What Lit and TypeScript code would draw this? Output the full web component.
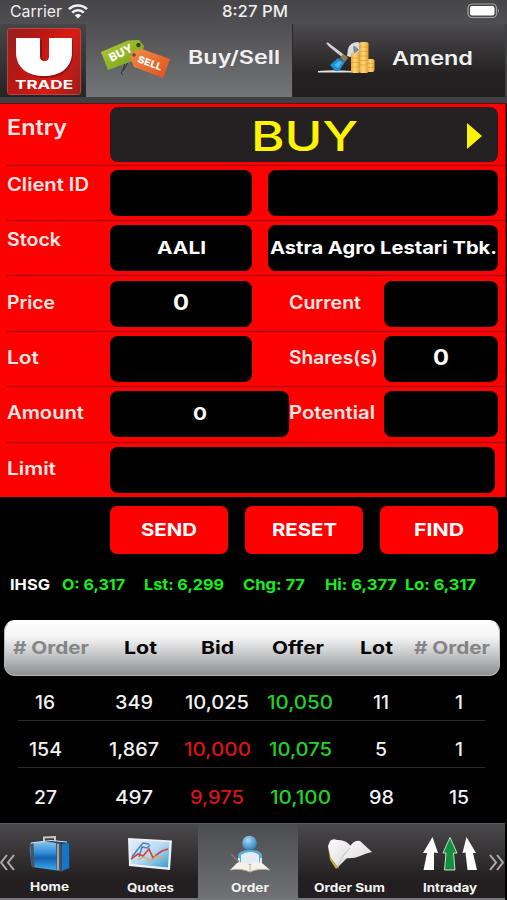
import { LitElement, html, css, svg, nothing } from "lit";
import { customElement, property } from "lit/decorators.js";
import { styleMap } from "lit/directives/style-map.js";

/** A single line of text, widened so that its letters fill a set width. */
@customElement("fit-text")
class FitText extends LitElement {
  @property({ type: Number }) w = 0;
  @property() text = "";

  static styles = css`
    :host { display: inline-block; white-space: pre; flex: none; text-align: left; }
    .run { display: inline-block; transform-origin: 0 50%; }
  `;

  render() {
    return html`<span class="run">${this.text}</span>`;
  }

  firstUpdated() {
    const run = this.renderRoot.querySelector(".run") as HTMLElement;
    const natural = run.getBoundingClientRect().width;
    this.style.width = `${this.w}px`;
    run.style.transform = `scaleX(${(this.w / natural).toFixed(4)})`;
    run.style.marginRight = `${(this.w - natural).toFixed(2)}px`;
  }
}

const fit = (text: string, w: number) => html`<fit-text .text=${text} .w=${w}></fit-text>`;

type Box = { text?: string; w?: number; cls?: string };
type Row = { label: string; lw: number; cls: string; a: Box; label2?: string; l2w?: number; b?: Box };

const ROWS: Row[] = [
  { label: "Client ID", lw: 82, cls: "pair high", a: {}, b: {} },
  { label: "Stock", lw: 54, cls: "pair high", a: { text: "AALI", w: 49 }, b: { text: "Astra Agro Lestari Tbk.", w: 227 } },
  { label: "Price", lw: 48, cls: "trio tall drop", a: { text: "0", w: 16, cls: "big" }, label2: "Current", l2w: 72, b: {} },
  { label: "Lot", lw: 32, cls: "trio", a: {}, label2: "Shares(s)", l2w: 89, b: { text: "0", w: 16, cls: "big" } },
  { label: "Amount", lw: 77, cls: "trio wide tall", a: { text: "0", w: 14 }, label2: "Potential", l2w: 86, b: {} },
  { label: "Limit", lw: 49, cls: "full last", a: {} },
];

const INDEX: [string, number, number][] = [
  ["O: 6,317", 0, 63], ["Lst: 6,299", 19, 80], ["Chg: 77", 19, 62], ["Hi: 6,377", 20, 72], ["Lo: 6,317", 8, 71],
];

const HEADS: [string, number, boolean][] = [
  ["# Order", 76, true], ["Lot", 33, false], ["Bid", 33, false], ["Offer", 52, false], ["Lot", 33, false], ["# Order", 76, true],
];

const BOOK: [string, number, string?][][] = [
  [["16", 20], ["349", 38], ["10,025", 64], ["10,050", 66, "up"], ["11", 16], ["1", 8]],
  [["154", 33], ["1,867", 50], ["10,000", 67, "down"], ["10,075", 63, "up"], ["5", 12], ["1", 8]],
  [["27", 23], ["497", 38], ["9,975", 54, "down"], ["10,100", 61, "up"], ["98", 25], ["15", 20]],
];

const wifi = svg`<svg class="wifi" width="20" height="15" viewBox="0 0 20 15" fill="none" stroke="#f2f2f2" stroke-width="2.5">
  <path d="M1 5.2a12.8 12.8 0 0 1 18 0"/><path d="M4.2 8.6a8.2 8.2 0 0 1 11.6 0"/>
  <path d="M10 14.4 6.8 11.2a4.6 4.6 0 0 1 6.4 0z" fill="#f2f2f2" stroke="none"/></svg>`;

const battery = svg`<svg class="battery" width="34" height="16" viewBox="0 0 34 16">
  <rect x="1" y="1" width="28.5" height="13.5" rx="4" fill="none" stroke="#a2a2a2" stroke-width="1.2"/>
  <rect x="3" y="3" width="24.5" height="9.5" rx="2.2" fill="#fff"/>
  <path d="M31 5.5q1.8 2.2 0 4.5z" fill="#a2a2a2"/></svg>`;

const logoU = svg`<svg width="58" height="42" viewBox="0 0 58 42">
  <path d="M3 3h24v17q0 4 4 4t4-4V3h23v14c0 17-13 24-27 24S3 34 3 17z" fill="#6d0d0b" opacity=".6"/>
  <path d="M1 1h24v18.500q0 4.500 4.500 4.500t4.500-4.500V1h23v14c0 17-13 24-28 24S1 32 1 15z" fill="#fff"/></svg>`;

const tags = svg`<svg width="72" height="40" viewBox="0 0 72 40" font-family="Inter, sans-serif" font-weight="800" fill="#fff">
  <defs>
    <linearGradient id="tg" x1="0" y1="0" x2="1" y2="1"><stop offset="0" stop-color="#b5d233"/><stop offset="1" stop-color="#6f961c"/></linearGradient>
    <linearGradient id="to" x1="0" y1="0" x2="1" y2="1"><stop offset="0" stop-color="#f28c4a"/><stop offset="1" stop-color="#e04f1a"/></linearGradient>
  </defs>
  <path d="M24 20q2 7-3 14l2 2M32 16l-9 16" fill="none" stroke="#333" stroke-width="1"/>
  <path d="M1 13 28 1.500 39 1l5 6-3 12-33 12z" fill="url(#tg)"/>
  <circle cx="38.500" cy="6" r="2.200" fill="#3c4219"/>
  <path d="M34 12 42 10 70 20 63 39 34 28 30 18z" fill="url(#to)"/>
  <circle cx="34" cy="16" r="1.800" fill="#6b4630"/>
  <text x="0" y="0" font-size="11.500" textLength="25" lengthAdjust="spacingAndGlyphs" transform="translate(11.500 23) rotate(-27)">BUY</text>
  <text x="0" y="0" font-size="9.500" textLength="25" lengthAdjust="spacingAndGlyphs" transform="translate(37 23) rotate(20)">SELL</text></svg>`;

const amend = svg`<svg width="58" height="34" viewBox="0 0 58 34">
  <defs>
    <linearGradient id="gold" x1="0" x2="1"><stop offset="0" stop-color="#eda93e"/><stop offset=".45" stop-color="#fcd876"/><stop offset="1" stop-color="#e59c30"/></linearGradient>
  </defs>
  <path d="M1 30q16-1.500 34 0v1.500H1z" fill="#e3e0df"/>
  <path d="M9 2 11 1.500 30 16l-2 2.500L12.500 6z" fill="#cfd1d3"/>
  <path d="M31 8q2-7 10-7l4 3-4 9-8 3-3-1z" fill="#d9dde0"/><path d="M36 5q3 0 6 4l-5 4z" fill="#828b93"/>
  <path d="m26 13 5 4-3 4-5-4z" fill="#8f7a58"/>
  <path d="m13 24 8-7 7 4-6 9h-4z" fill="#178fd0"/><path d="m17 24 5-4 3 2-4 5z" fill="#55b4e6"/>
  <g fill="url(#gold)"><rect x="42" y="1" width="9.500" height="31" rx="2"/><rect x="34" y="12" width="9" height="20" rx="2"/><rect x="50" y="18" width="7.500" height="13" rx="2"/></g>
  <path d="M42 6h9.500M42 10.500h9.500M42 15h9.500M42 19.500h9.500M42 24h9.500M34 17h9M34 21.500h9M34 26h9M50 22.500h7.500M50 26.500h7.500" stroke="#c98a2a" stroke-width=".4"/></svg>`;

const home = svg`<svg width="42" height="38" viewBox="0 0 42 38">
  <defs><linearGradient id="hb" x1="0" y1="0" x2="0" y2="1"><stop offset="0" stop-color="#87c6f2"/><stop offset=".4" stop-color="#2c87d4"/><stop offset=".55" stop-color="#145fae"/><stop offset="1" stop-color="#3fb2f0"/></linearGradient></defs>
  <path d="M15 7V2.500L26 2v5" fill="none" stroke="#c9c6c0" stroke-width="2"/>
  <path d="M1 8 36 5l5 4v24l-9 4z" fill="#24405c"/>
  <path d="M1 8q15-3 31 1v27L3 32Q0 20 1 8z" fill="url(#hb)"/>
  <path d="m33 9 7-1v25l-7 3z" fill="#1675c4"/>
  <path d="m1 8.500 3.500-.5 1 24L3 32zM27 8l5.500 1v27l-5-.8z" fill="#49545d"/><path d="m28 9 2 .3V35h-2z" fill="#9ca7ae"/>
  <path d="M2 8 22 5.500 38 7" stroke="#d7e8f4" stroke-width="1" fill="none"/></svg>`;

const quotes = svg`<svg width="46" height="34" viewBox="0 0 46 34">
  <defs><linearGradient id="qb" x1="0" y1="0" x2="1" y2="1"><stop offset="0" stop-color="#e6eefb"/><stop offset=".5" stop-color="#b8daf2"/><stop offset="1" stop-color="#349bcc"/></linearGradient></defs>
  <path d="M1 1 45 3.500 43 33 2 29z" fill="#eef1f6"/><path d="M3 3 42.500 5 41 30.500 4 27z" fill="url(#qb)"/>
  <path d="m5 20 6-8 5-6 6 1M12 20l3-10 5 1 3-3" fill="none" stroke="#5580bd" stroke-width="1.600"/>
  <path d="m4 22 7-5 5 2 6-7 4 9 6-5 3-2 6-2" fill="none" stroke="#d4443c" stroke-width="1.700"/>
  <path d="m11 23 6-3 7 4 5-5 7 3" fill="none" stroke="#e8a54b" stroke-width="1.300"/></svg>`;

const order = svg`<svg width="42" height="38" viewBox="0 0 42 38">
  <defs><radialGradient id="oh" cx=".4" cy=".3" r=".7"><stop offset="0" stop-color="#a8dbf7"/><stop offset="1" stop-color="#2f80ba"/></radialGradient></defs>
  <path d="M9 31V20q2-5 12-5t12 5v11z" fill="#5caad8"/>
  <path d="M12 29V20q9-6 18 0v9z" fill="#e4edf5"/><path d="M10 23v8M32 23v8" stroke="#d8eafa" stroke-width="2"/>
  <circle cx="20.500" cy="8" r="7.300" fill="url(#oh)"/>
  <path d="M1 35 8 28q8-2 13 2 5-4 12-2l8 7q-12-2-20 2-8-4-20-2z" fill="#f5f1e6"/>
  <path d="M21 30v7M1 35q12-2 20 2 8-4 20-2" stroke="#b9b19f" fill="none" stroke-width=".9"/>
  <path d="m2 19 8 8" stroke="#85777a" stroke-width="1.300"/></svg>`;

const book = svg`<svg width="46" height="32" viewBox="0 0 46 32">
  <defs><linearGradient id="bk" x1="0" y1="0" x2="1" y2="1"><stop offset="0" stop-color="#fff"/><stop offset="1" stop-color="#d6d6d6"/></linearGradient></defs>
  <path d="M1 9 3 22l6 9 3-2L5 20 3 9z" fill="#c7a93c"/>
  <path d="M3 3Q6 0 10 2q8-1 14 6l2 5-6 7-9 9L4 20 1 8z" fill="url(#bk)"/>
  <path d="M22 10Q27 1 33 3l12 11q-5 1-12 4-6 3-16 2l-7 9 9-14z" fill="url(#bk)"/>
  <path d="M23 10Q15 18 10 29" stroke="#b5b5b5" fill="none" stroke-width=".8"/></svg>`;

const intraday = svg`<svg width="56" height="35" viewBox="0 0 56 35">
  <path d="M10.500 1 16 17l-4-.5L12 34H1.500L5 17H1z" fill="#fff"/>
  <path d="M28 1.500 35 17h-3.500L33 34H22.500L24 17h-3z" fill="#12903c" stroke="#d8eadb" stroke-width=".9"/>
  <path d="M44.500 1 54 17h-3l4 17H45.500l-2-17.500-3 .5z" fill="#fff"/></svg>`;

const NAV = [
  { text: "Home", w: 39, icon: home }, { text: "Quotes", w: 47, icon: quotes }, { text: "Order", w: 38, icon: order },
  { text: "Order Sum", w: 71, icon: book }, { text: "Intraday", w: 54, icon: intraday },
];

@customElement("app-root")
class AppRoot extends LitElement {
  static styles = css`
    :host { display: block; width: 507px; height: 900px; overflow: hidden; background: #000; color: #fff;
      font-family: Inter, "Open Sans", "Liberation Sans", sans-serif; }
    * { box-sizing: border-box; }
    svg { display: block; flex: none; }

    .head { height: 104px; background: #3f4042; border-bottom: 1.500px solid #6a0d10; }
    .status { height: 24px; display: grid; grid-template-columns: 1fr 96px 1fr; align-items: center; padding: 0 6px 0 10px;
      background: linear-gradient(#464648, #4f4f51); font-size: 16px; line-height: 22px; color: #eee; }
    .carrier { display: flex; align-items: center; gap: 6px; font-size: 16px; }
    .carrier fit-text, .time { margin-top: -2px; }
    .time { text-align: center; font-weight: 500; padding-right: 1px; }
    .carrier svg { margin-top: -2px; }
    .battery { justify-self: end; margin-top: -2px; }
    .tabs { height: 73px; display: grid; grid-template-columns: 86px 206px 213px; width: 505px; }
    .brand { background: linear-gradient(#464547, #262425); padding: 4px 5px 2px 7px; }
    .logo { width: 74px; height: 67px; border: 1.500px solid #b54743; border-radius: 3px; display: flex; flex-direction: column;
      align-items: center; padding-top: 8px; background: linear-gradient(115deg, #94211e 0%, #bb1712 35%, #d91b13 65%, #9a1e1c 100%); }
    .logo .name { font-size: 12px; font-weight: 700; line-height: 14px; margin-top: -1px; }
    .tab { display: flex; align-items: center; font-size: 18.500px; font-weight: 600; color: #f1f1f1; line-height: 22px; }
    .tab.on { background: linear-gradient(#4f4f51, #747578); padding-left: 14px; }
    .tab.off { background: linear-gradient(#4b4a4c, #252122 68%, #231f20); padding-left: 24px; border-left: 1px solid #2a2829; }
    .tab.on fit-text { margin: -7px 0 0 16px; }
    .tab.off fit-text { margin: -6px 0 0 17px; }
    .tab.off svg { margin-top: -6px; }
    .tab.on svg { margin-top: -4px; }

    .form { width: 506px; background: #fd0000; border-right: 1px solid #a00; }
    .row { display: grid; height: 55px; margin-left: 7px; border-bottom: 1px solid #9b0505; align-items: start; padding-top: 4px;
      font-size: 18px; line-height: 20px; font-weight: 560; color: #ffe9e4; }
    .row.tall { height: 56px; }
    .row.drop { padding-top: 5px; }
    .row.last { height: 54px; border-bottom: 0; }
    .row.entry { height: 62px; padding-top: 3px; grid-template-columns: 103px 388px; font-size: 21px; line-height: 24px; }
    .row.pair { grid-template-columns: 103px 142px 230px; }
    .row.pair .b { margin-left: 16px; width: 230px; }
    .row.trio { grid-template-columns: 103px 179px 95px 114px; }
    .row.full { grid-template-columns: 103px 385px; }
    .trio .a { width: 142px; }
    .trio.wide .a { width: 179px; }
    .lab { padding-top: 12px; }
    .high .lab { padding-top: 5px; }
    .entry .lab { padding-top: 9px; }
    .box { height: 46px; border-radius: 8px; background: #000; display: flex; align-items: center; justify-content: center;
      font-size: 18px; font-weight: 750; color: #fff; padding-bottom: 1px; }
    .box.big { font-size: 21px; padding-bottom: 3px; }
    .entry .box { height: 55px; background: #252122; color: #fdf403; font-size: 41px; line-height: 48px; font-weight: 500;
      display: grid; grid-template-columns: 1fr 107px 1fr; padding: 2px 16px 0; }
    .tri { justify-self: end; }

    .actions { display: flex; gap: 17px; padding: 9px 0 0 110px; }
    .btn { width: 118px; height: 48px; border: 0; border-radius: 7px; background: #fd0000; color: #fff; display: flex;
      align-items: center; justify-content: center; font: 750 18px/20px Inter, sans-serif; padding: 0 0 1px; }
    .index { display: flex; height: 66px; padding: 22px 0 0 10px; font-size: 15px; line-height: 18px; font-weight: 700; color: #15f01c; }
    .index .iname { width: 52px; color: #fff; }

    .cols { display: grid; margin: 0 7px 0 4px; height: 56px; border-radius: 11px; align-items: center; justify-items: center;
      grid-template-columns: 92px 86px 68px 94px 62px 90px; border: 1px solid #b9b9b9; border-top-color: #fff;
      background: linear-gradient(#fff 0%, #f4f4f4 30%, #c6c7c9 62%, #8d8e90 100%);
      color: #050505; font-size: 17.500px; font-weight: 750; line-height: 22px; }
    .cols .dim { color: #858585; }
    .line { display: grid; height: 47px; grid-template-columns: 90px 88px 78px 88px 74px 82px; align-items: center;
      justify-items: center; background: linear-gradient(#2b2b2b, #2b2b2b) 18px 100% / 467px 1px no-repeat;
      font-size: 18px; line-height: 22px; font-weight: 540; color: #f3f3f3; padding-top: 10px; }
    .line.first { height: 45px; padding-top: 9px; }
    .line:last-child { background: none; padding-top: 12px; }
    .up { color: #20d32a; }
    .down { color: #dc1418; }
    .book { height: 147px; }

    .nav { height: 77px; width: 505px; display: grid; grid-template-columns: 99px 99px 100px 100px 107px; border-top: 1.500px solid #5a5a5c;
      border-bottom: 2px solid #77787a; background: linear-gradient(#4a494b, #231f20 75%); position: relative; }
    .item { display: flex; flex-direction: column; align-items: center; justify-content: space-between; padding: 10px 0 3px;
      font-size: 12px; line-height: 14px; font-weight: 700; color: #f3f3f3; }
    .item.on { background: linear-gradient(#4c4d4f, #707174); padding-left: 3px; }
    .item:nth-child(4), .item:nth-child(2) { padding-left: 3px; }
    .item:nth-child(5) { padding-right: 4px; }
    .item:nth-child(1) { padding-bottom: 4px; }
    .item .pic { height: 39px; display: flex; align-items: center; }
    .chev { position: absolute; top: 30px; }
    .chev.l { left: 0; }
    .chev.r { right: 1px; }
  `;

  private box(b: Box, slot: string) {
    return html`<div class="box ${slot} ${b.cls ?? ""}">${b.text ? fit(b.text, b.w!) : nothing}</div>`;
  }

  render() {
    return html`
      <header class="head">
        <div class="status">
          <div class="carrier">${fit("Carrier", 52)}${wifi}</div>
          <div class="time">${fit("8:27 PM", 66)}</div>
          ${battery}
        </div>
        <div class="tabs">
          <div class="brand"><div class="logo">${logoU}<div class="name">${fit("TRADE", 58)}</div></div></div>
          <div class="tab on">${tags}${fit("Buy/Sell", 92)}</div>
          <div class="tab off">${amend}${fit("Amend", 81)}</div>
        </div>
      </header>

      <section class="form">
        <div class="row entry">
          <div class="lab">${fit("Entry", 60)}</div>
          <div class="box"><span></span>${fit("BUY", 107)}
            <svg class="tri" width="15" height="26" viewBox="0 0 15 26"><path d="M0 0 15 13 0 26z" fill="#fdf403"/></svg>
          </div>
        </div>
        ${ROWS.map((r) => html`<div class="row ${r.cls}">
          <div class="lab">${fit(r.label, r.lw)}</div>
          ${this.box(r.a, "a")}
          ${r.label2 ? html`<div class="lab">${fit(r.label2, r.l2w!)}</div>` : nothing}
          ${r.b ? this.box(r.b, "b") : nothing}
        </div>`)}
      </section>

      <div class="actions">
        <button class="btn">${fit("SEND", 56)}</button>
        <button class="btn">${fit("RESET", 65)}</button>
        <button class="btn">${fit("FIND", 50)}</button>
      </div>

      <div class="index">
        <span class="iname">${fit("IHSG", 40)}</span>
        ${INDEX.map(([t, gap, w]) => html`<span style=${styleMap({ marginLeft: `${gap}px` })}>${fit(t, w)}</span>`)}
      </div>

      <div class="cols">${HEADS.map(([t, w, dim]) => html`<span class=${dim ? "dim" : ""}>${fit(t, w)}</span>`)}</div>
      <div class="book">
        ${BOOK.map((l, i) => html`<div class="line ${i ? "" : "first"}">
          ${l.map(([t, w, c]) => html`<span class=${c ?? ""}>${fit(t, w)}</span>`)}
        </div>`)}
      </div>

      <nav class="nav">
        ${NAV.map((n, i) => html`<div class="item ${i === 2 ? "on" : ""}"><div class="pic">${n.icon}</div>${fit(n.text, n.w)}</div>`)}
        <svg class="chev l" width="15" height="17" viewBox="0 0 15 17" fill="none" stroke="#aeaeb0" stroke-width="2"><path d="M7 1 1 8.500 7 16M14 1 8 8.500 14 16"/></svg>
        <svg class="chev r" width="15" height="17" viewBox="0 0 15 17" fill="none" stroke="#aeaeb0" stroke-width="2"><path d="m1 1 6 7.500L1 16M8 1l6 7.500L8 16"/></svg>
      </nav>
    `;
  }
}
